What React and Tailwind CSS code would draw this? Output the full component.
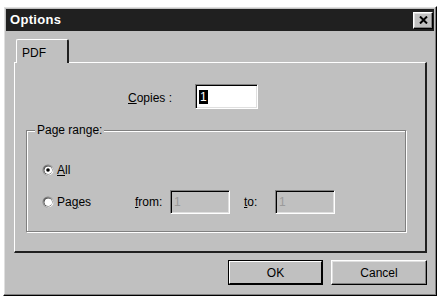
import React from "react";

const raised =
  "border border-t-white border-l-white border-r-black border-b-black shadow-[inset_-1px_-1px_0_#808080,inset_1px_1px_0_#dfdfdf]";
const sunken =
  "border border-t-[#808080] border-l-[#808080] border-r-white border-b-white shadow-[inset_1px_1px_0_#000,inset_-1px_-1px_0_#dfdfdf]";

const Radio = ({ checked }) => (
  <svg width="12" height="12" viewBox="0 0 12 12">
    <circle cx="6" cy="6" r="5.5" fill="#808080" />
    <circle cx="6.5" cy="6.5" r="5" fill="#fff" />
    <circle cx="6" cy="6" r="4.5" fill="#404040" />
    <circle cx="6.3" cy="6.3" r="3.8" fill="#fff" />
    {checked && <circle cx="6" cy="6" r="1.8" fill="#000" />}
  </svg>
);

export default function App() {
  return (
    <div className="w-[440px] h-[298px] bg-white pl-[3px] pt-[6px] font-['Liberation_Sans',Arial,sans-serif] text-[12px] text-black">
      <div className={`w-[434px] h-[290px] bg-[#c0c0c0] p-[2px] ${raised}`}>
        {/* title bar */}
        <div className="h-[22px] bg-[#202020] flex items-center justify-between pl-[4px] pr-[1px]">
          <span className="text-white font-bold text-[13px] tracking-[0.3px]">Options</span>
          <div className={`w-[20px] h-[17px] bg-[#c0c0c0] flex items-center justify-center ${raised}`}>
            <svg width="9" height="8" viewBox="0 0 9 8">
              <path d="M1 0.5 L8 7.5 M8 0.5 L1 7.5" stroke="#000" strokeWidth="2" />
            </svg>
          </div>
        </div>

        {/* body */}
        <div className="pl-[8px] pt-[8px] pr-[7px]">
          {/* tab strip */}
          <div className="flex pl-[2px] h-[24px] relative z-10">
            <div className="w-[53px] h-[24px] bg-[#c0c0c0] border-t border-l border-white border-r-2 border-r-[#202020] rounded-tl-[2px] rounded-tr-[2px] pl-[5px] pt-[4px]">
              PDF
            </div>
          </div>

          {/* tab panel */}
          <div className="-mt-[1px] h-[191px] border-t border-l border-t-white border-l-white border-r-2 border-b-2 border-r-[#202020] border-b-[#202020] pt-[21px]">
            <div className="flex items-center pl-[113px]">
              <span className="w-[67px] pt-[2px]">
                <span className="underline">C</span>opies :
              </span>
              <div className={`w-[63px] h-[25px] bg-white flex items-center pl-[3px] ${sunken}`}>
                <span className="bg-black text-white leading-[14px] px-[1px]">1</span>
              </div>
            </div>

            {/* group box */}
            <div className="relative mt-[21px] ml-[11px] w-[380px] h-[102px] border border-[#808080] shadow-[inset_1px_1px_0_#fff,1px_1px_0_#fff]">
              <span className="absolute -top-[9px] left-[8px] bg-[#c0c0c0] px-[2px] leading-[16px]">
                Page range:
              </span>
              <div className="flex items-center gap-[3px] pl-[15px] pt-[30px]">
                <Radio checked />
                <span>
                  <span className="underline">A</span>ll
                </span>
              </div>
              <div className="flex items-center pl-[15px] pt-[11px]">
                <Radio />
                <span className="ml-[3px] w-[78px]">
                  Pa<span className="underline">g</span>es
                </span>
                <span className="w-[35px]">
                  <span className="underline">f</span>rom:
                </span>
                <div className={`w-[60px] h-[24px] bg-[#c0c0c0] flex items-center pl-[3px] text-[#9a9a9a] ${sunken}`}>
                  1
                </div>
                <span className="ml-[14px] w-[31px]">
                  <span className="underline">t</span>o:
                </span>
                <div className={`w-[60px] h-[24px] bg-[#c0c0c0] flex items-center pl-[3px] text-[#9a9a9a] ${sunken}`}>
                  1
                </div>
              </div>
            </div>
          </div>

          {/* buttons */}
          <div className="flex justify-end gap-[8px] mt-[7px]">
            <button className="w-[95px] h-[25px] bg-[#c0c0c0] border border-black flex items-center justify-center p-0">
              <span className={`w-full h-full flex items-center justify-center ${raised} border-r-[#808080] border-b-[#808080] shadow-none`}>
                OK
              </span>
            </button>
            <button className={`w-[96px] h-[25px] bg-[#c0c0c0] flex items-center justify-center ${raised}`}>
              Cancel
            </button>
          </div>
        </div>
      </div>
    </div>
  );
}
